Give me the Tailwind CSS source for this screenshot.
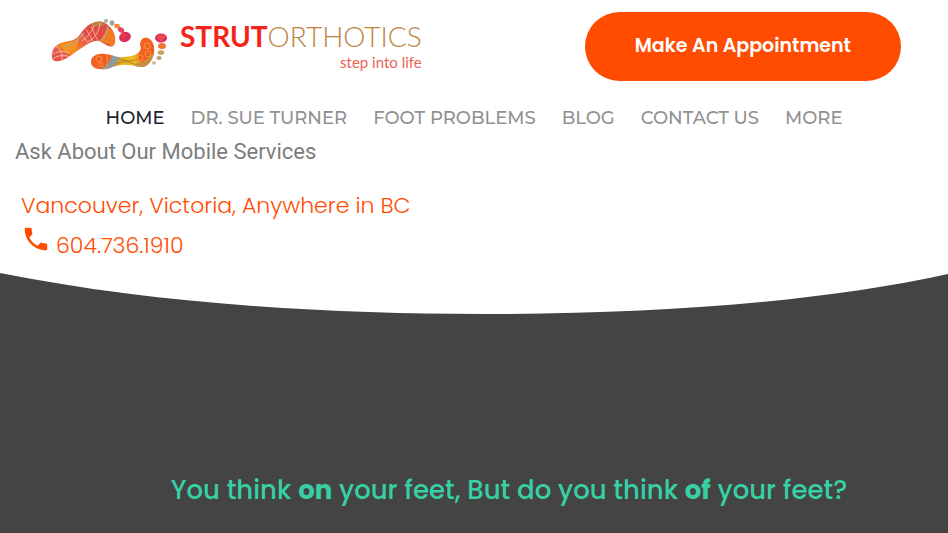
<!DOCTYPE html>
<html lang="en">
<head>
<meta charset="utf-8">
<meta name="viewport" content="width=device-width, initial-scale=1">
<title>Strut Orthotics</title>
<script src="https://cdn.jsdelivr.net/npm/@tailwindcss/browser@4"></script>
</head>
<body class="bg-[#444444] font-['Poppins','Inter',sans-serif] overflow-x-hidden">
<header class="bg-white">
  <div class="flex items-start justify-between pl-[50px] pr-[47px] pt-3">
    <a href="#" aria-label="Strut Orthotics home" class="flex items-start gap-3">
      <svg class="mt-1 w-[118px] h-[58px]" viewBox="0 0 118 58" aria-hidden="true">
        <defs>
          <linearGradient id="sole1" x1="0" y1="1" x2="1" y2="0">
            <stop offset="0" stop-color="#d94d48"/><stop offset=".2" stop-color="#e8584a"/><stop offset=".3" stop-color="#f58a1f"/><stop offset=".45" stop-color="#f06a3c"/><stop offset=".6" stop-color="#e2463f"/><stop offset="1" stop-color="#e4574b"/>
          </linearGradient>
          <linearGradient id="sole2" x1="0" y1="0" x2="1" y2="0">
            <stop offset="0" stop-color="#f4621f"/><stop offset=".25" stop-color="#ee5a2a"/><stop offset=".45" stop-color="#e7a91d"/><stop offset=".65" stop-color="#e8bd20"/><stop offset=".8" stop-color="#f36c20"/><stop offset="1" stop-color="#ee5130"/>
          </linearGradient>
          <clipPath id="clip1"><path d="M2 42C1 35 5 29 11 27C17 25 24 25 28 21C32 16 36 9 43 7C49 4 56 6 60 11C65 16 67 26 63 30C59 32 54 27 49 25C44 24 38 28 33 31C26 35 19 42 13 44C7 46 3 46 2 42Z"/></clipPath>
          <clipPath id="clip2"><path d="M41 46C41 40 47 37 55 38C61 38 66 42 73 41C81 41 91 38 91 32C89 26 92 21 97 22C102 23 105 30 104 36C103 44 98 51 92 51C84 50 76 47 66 50C59 52 56 54 50 53C44 53 41 50 41 46Z"/></clipPath>
        </defs>
        <g clip-path="url(#clip1)">
          <rect width="70" height="50" fill="url(#sole1)"/>
          <path d="M10 30L29 23L26 34L17 37Z" fill="#f6931e"/>
          <path d="M57 13L68 12L67 32L50 25Z" fill="#f47a22"/>
          <path d="M40 7L52 5L54 9L44 11Z" fill="#b9863c"/>
          <g fill="none" stroke="#f7d3c4" stroke-width=".7">
            <path d="M1 39Q10 33 20 37M2 43Q11 37 20 41M6 30Q13 34 12 44M31 18L38 27M36 13L43 25M41 10L48 25M32 25Q42 18 44 9M38 26Q49 20 50 7"/>
          </g>
          <path d="M58 10Q57 20 50 25M14 31Q26 28 34 17" fill="none" stroke="#a3ada3" stroke-width="1.2"/>
        </g>
        <g clip-path="url(#clip2)">
          <rect x="40" y="18" width="68" height="40" fill="url(#sole2)"/>
          <path d="M90 20L106 20L105 38L92 47L88 42Z" fill="#f26320"/>
          <path d="M63 38L70 41Q67 49 57 55L51 53Q60 48 63 38Z" fill="#8b9d9d"/>
          <path d="M84 48Q96 47 103 37L107 44Q101 54 87 53Z" fill="#c58c45"/>
          <g fill="none" stroke="#ffa040" stroke-width=".8">
            <circle cx="49" cy="43" r="3"/><circle cx="51" cy="49" r="2"/><circle cx="97" cy="30" r="3"/><circle cx="98" cy="38" r="3"/><circle cx="90" cy="42" r="3"/><path d="M56 39Q60 45 54 53"/>
          </g>
          <path d="M66 48Q75 43 84 48M69 43Q79 47 88 43" fill="none" stroke="#b5822c" stroke-width="1"/>
        </g>
        <ellipse cx="75" cy="21" rx="6" ry="5" transform="rotate(-20 75 21)" fill="#dc2a67"/><path d="M70 20Q73 16 78 18L74 24Z" fill="#e8472f" opacity=".6"/>
        <ellipse cx="71" cy="14" rx="3.400" ry="2.500" transform="rotate(30 71 14)" fill="#e84367"/>
        <ellipse cx="67" cy="10" rx="2.800" ry="2.300" fill="#f08a3f"/>
        <ellipse cx="62" cy="7" rx="2.400" ry="2.800" fill="#9fa79c"/>
        <ellipse cx="56" cy="5" rx="2.200" ry="2" fill="#a9b5a7"/>
        <ellipse cx="111" cy="22" rx="6" ry="4.500" fill="#db2c68"/><path d="M106 21Q110 17 116 20L111 26Z" fill="#f26438" opacity=".6"/>
        <ellipse cx="112" cy="30" rx="4" ry="3" fill="#f37330"/>
        <ellipse cx="111" cy="36.500" rx="3.200" ry="2.300" fill="#c89e60"/>
        <ellipse cx="109" cy="42" rx="2.600" ry="2.100" fill="#bba06b"/>
        <ellipse cx="104" cy="47" rx="2" ry="1.800" fill="#c7b891"/>
      </svg>
      <span class="flex flex-col items-end pt-[7px] font-['Lato',sans-serif]">
        <span class="text-[28px] leading-[34px] whitespace-nowrap"><span class="font-bold text-[#f5241a]">STRUT</span><span class="font-light text-[#bd8440]">ORTHOTICS</span></span>
        <span class="text-[15px] leading-[18px] text-[#e86353]">step into life</span>
      </span>
    </a>
    <a href="#" class="flex h-[69px] items-center rounded-full bg-[#ff4c00] px-[50px] text-[19px] font-semibold text-white whitespace-nowrap">Make An Appointment</a>
  </div>
  <nav aria-label="Main" class="flex justify-center gap-[26px] pt-[25px] font-['Montserrat','Poppins',sans-serif] text-lg leading-6 font-medium text-[#919191] whitespace-nowrap">
    <a href="#" class="text-[#1d2433]">HOME</a>
    <a href="#">DR. SUE TURNER</a>
    <a href="#">FOOT PROBLEMS</a>
    <a href="#">BLOG</a>
    <a href="#">CONTACT US</a>
    <a href="#">MORE</a>
  </nav>
  <p class="px-[15px] pt-[6px] font-['Roboto',sans-serif] text-[22px] leading-8 text-[#7d7d7d]">Ask About Our Mobile Services</p>
  <address class="px-[21px] pt-5 text-[22px] font-light not-italic text-[#ff4c00]">
    <p class="leading-9">Vancouver, Victoria, Anywhere in BC</p>
    <a href="tel:6047361910" class="flex gap-[5px] leading-[44px]">
      <svg class="w-[30px] h-[30px]" viewBox="0 0 24 24" fill="currentColor" aria-hidden="true"><path d="M6.620 10.790c1.440 2.830 3.760 5.140 6.590 6.590l2.200-2.200c.27-.27.67-.36 1.020-.24 1.120.37 2.330.57 3.570.57.55 0 1 .45 1 1V20c0 .55-.45 1-1 1-9.390 0-17-7.610-17-17 0-.55.45-1 1-1h3.500c.55 0 1 .45 1 1 0 1.250.2 2.450.57 3.570.11.35.03.74-.25 1.020l-2.200 2.200z"/></svg>
      <span>604.736.1910</span>
    </a>
  </address>
</header>
<main>
  <svg class="block h-12 w-full" viewBox="0 0 948 48" preserveAspectRatio="none" aria-hidden="true"><path d="M0 0V5C150 35 320 46 484 46C660 46 820 34 948 6V0Z" fill="#fff"/></svg>
  <h1 class="pl-[86px] pr-4 pt-[154px] pb-[42px] text-center text-[26px] leading-10 font-medium text-[#37d0a5]">You think <strong class="font-bold">on</strong> your feet, But do you think <strong class="font-bold">of</strong> your feet?</h1>
</main>
</body>
</html>
